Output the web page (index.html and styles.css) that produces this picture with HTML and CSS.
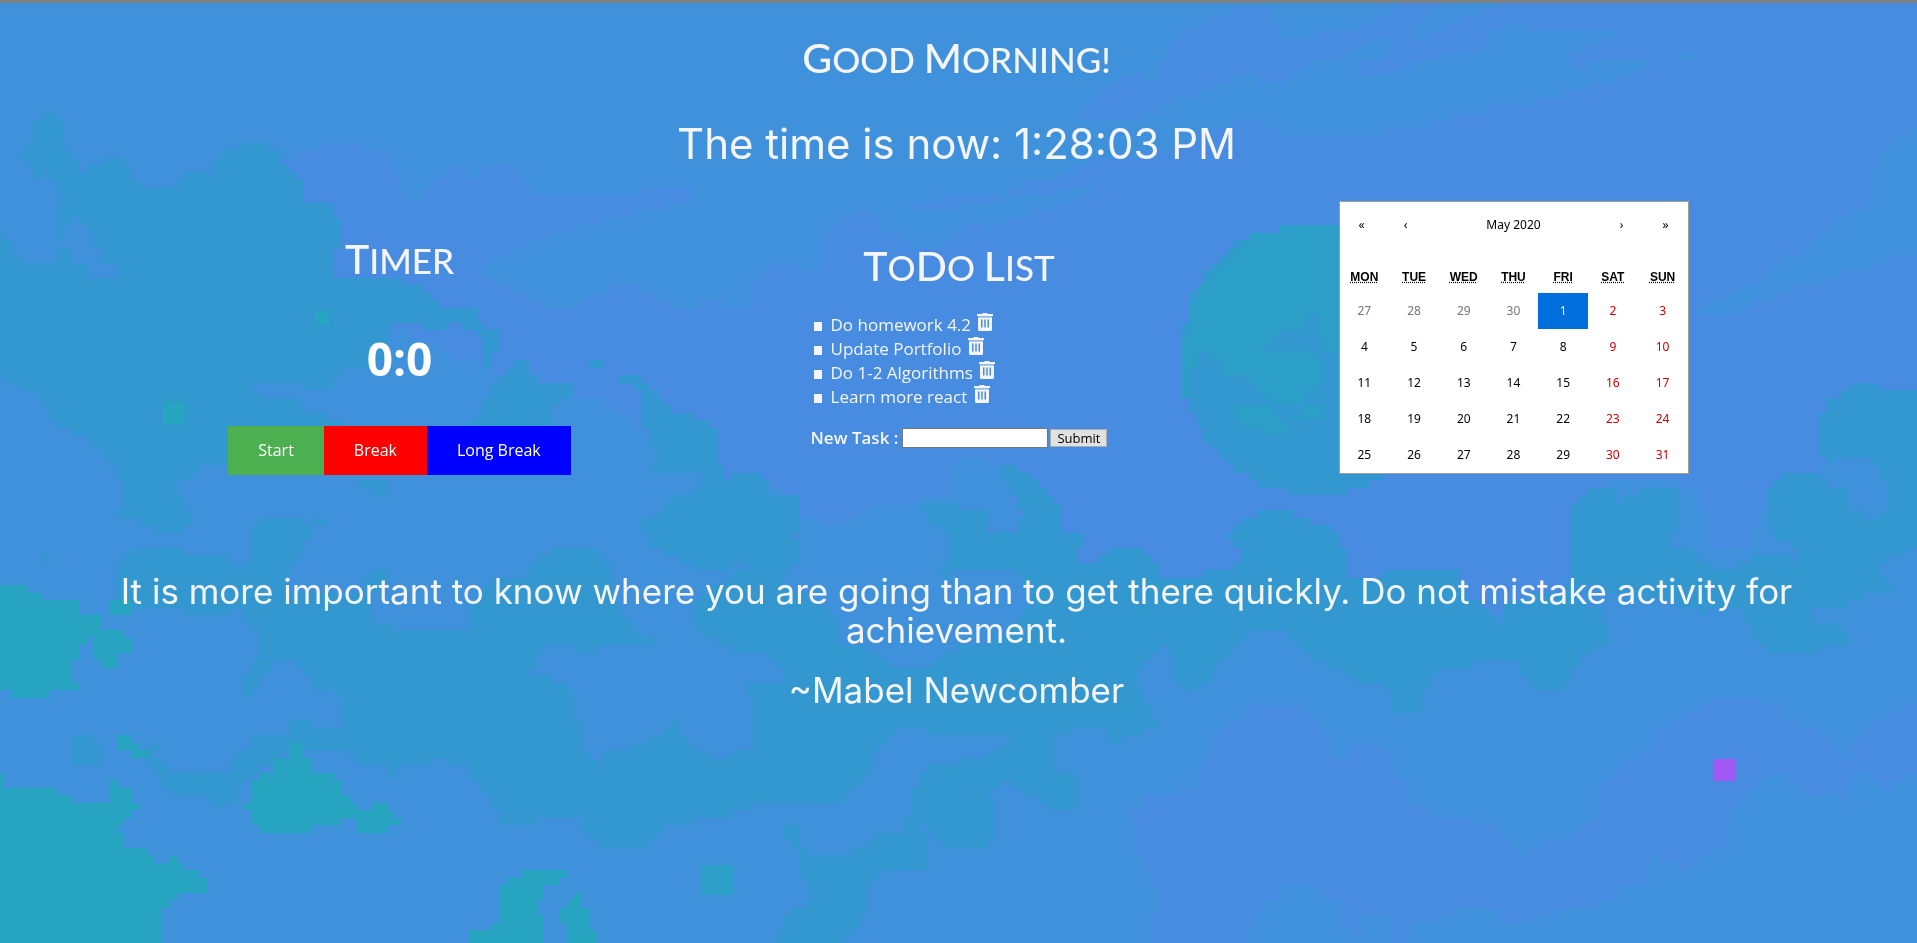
FILE: index.html
```html
<!DOCTYPE html>
<html lang="en">
<head>
<meta charset="utf-8">
<title>Good Morning!</title>
<link rel="stylesheet" href="styles.css">
</head>
<body>
<canvas class="backdrop" id="backdrop" width="1917" height="943" aria-hidden="true"></canvas>
<svg class="sprites" aria-hidden="true">
  <symbol id="trash" viewBox="0 0 16 18">
    <path fill="currentColor" d="M5.500 0h5v1H16v2H0V1h5.500z"/>
    <path fill="currentColor" opacity=".45" d="M1 3h14v1.500H1z"/>
    <path fill="currentColor" fill-rule="evenodd" d="M1 4.500h14V16.500Q15 18 13.500 18h-11Q1 18 1 16.500zM4 6.500v8h1.500v-8zM7.250 6.500v8h1.500v-8zM10.500 6.500v8H12v-8z"/>
  </symbol>
</svg>
<main class="page">
  <header class="intro">
    <h1 class="heading"><span>Good</span> <span>Morning!</span></h1>
    <p class="clock">The time is now: 1:28:03 PM</p>
  </header>
  <div class="widgets">
    <section class="timer">
      <h2 class="heading"><span>Timer</span></h2>
      <p class="count">0:0</p>
      <div class="actions">
        <button class="action start" type="button">Start</button>
        <button class="action break" type="button">Break</button>
        <button class="action long" type="button">Long Break</button>
      </div>
    </section>
    <section class="todo">
      <h2 class="heading"><span>To</span><span>Do</span> <span>List</span></h2>
      <div class="todo-body">
        <ul class="tasks">
          <li>Do homework 4.2 <button class="remove" type="button" aria-label="Delete"><svg><use href="#trash"/></svg></button></li>
          <li>Update Portfolio <button class="remove" type="button" aria-label="Delete"><svg><use href="#trash"/></svg></button></li>
          <li>Do 1-2 Algorithms <button class="remove" type="button" aria-label="Delete"><svg><use href="#trash"/></svg></button></li>
          <li>Learn more react <button class="remove" type="button" aria-label="Delete"><svg><use href="#trash"/></svg></button></li>
        </ul>
        <form class="new-task">
          <label for="task">New Task :</label>
          <input id="task" type="text" autofocus>
          <button class="submit" type="submit">Submit</button>
        </form>
      </div>
    </section>
    <section class="calendar">
      <nav class="months">
        <button type="button">«</button>
        <button type="button">‹</button>
        <button class="month" type="button">May 2020</button>
        <button type="button">›</button>
        <button type="button">»</button>
      </nav>
      <table class="days">
        <thead><tr><th><abbr title="Monday">MON</abbr></th><th><abbr title="Tuesday">TUE</abbr></th><th><abbr title="Wednesday">WED</abbr></th><th><abbr title="Thursday">THU</abbr></th><th><abbr title="Friday">FRI</abbr></th><th><abbr title="Saturday">SAT</abbr></th><th><abbr title="Sunday">SUN</abbr></th></tr></thead>
        <tbody>
          <tr><td class="other">27</td><td class="other">28</td><td class="other">29</td><td class="other">30</td><td class="today">1</td><td class="weekend">2</td><td class="weekend">3</td></tr>
          <tr><td>4</td><td>5</td><td>6</td><td>7</td><td>8</td><td class="weekend">9</td><td class="weekend">10</td></tr>
          <tr><td>11</td><td>12</td><td>13</td><td>14</td><td>15</td><td class="weekend">16</td><td class="weekend">17</td></tr>
          <tr><td>18</td><td>19</td><td>20</td><td>21</td><td>22</td><td class="weekend">23</td><td class="weekend">24</td></tr>
          <tr><td>25</td><td>26</td><td>27</td><td>28</td><td>29</td><td class="weekend">30</td><td class="weekend">31</td></tr>
        </tbody>
      </table>
    </section>
  </div>
  <section class="quote">
    <p>It is more important to know where you are going than to get there quickly. Do not mistake activity for achievement.</p>
    <p>~Mabel Newcomber</p>
  </section>
</main>
<script src="backdrop.js"></script>
</body>
</html>
```
FILE: styles.css
```css
* { box-sizing: border-box; }

body {
  margin: 0;
  min-height: 100vh;
  border-top: 3px solid #808080;
  background: #3f90db;
  color: #f5f5f5;
  font-family: "Open Sans", sans-serif;
  font-size: 16px;
}

.backdrop {
  position: fixed;
  inset: 0;
  z-index: -1;
  width: 100%;
  height: 100%;
  object-fit: cover;
}

.sprites { display: none; }

.page { padding-right: 4px; }

.heading {
  margin: 0;
  font-family: Lato, sans-serif;
  font-size: 35px;
  line-height: 48px;
  font-weight: 500;
  text-align: center;
  text-transform: uppercase;
}

.heading span { display: inline-block; }
.heading span::first-letter { font-size: 41px; }

.intro {
  padding-top: 31px;
  text-align: center;
}

.clock {
  margin: 35px 0 0;
  font-family: Inter, sans-serif;
  font-size: 42px;
  line-height: 52px;
}

.widgets {
  display: grid;
  grid-template-columns: repeat(3, 1fr);
  margin: 31px 121px 0;
  align-items: start;
}

.timer, .todo, .calendar { justify-self: center; }

.timer { padding-top: 34px; }

.count {
  margin: 43px 0 36px;
  color: #fff;
  font-size: 46px;
  line-height: 63px;
  font-weight: 700;
  text-align: center;
}

.actions { display: flex; }

.action {
  padding: 0 30px;
  border: 0;
  color: #fff;
  font: 16px/49px "Open Sans", sans-serif;
}

.start { background: #4caf50; }
.break { background: #f00; }
.long { background: #00f; }

.todo { padding: 41px 0 0 5px; }

.tasks {
  margin: 22px 0 19px;
  padding-left: 3px;
  font-size: 17px;
  line-height: 24px;
  list-style: none;
}

.tasks li::before {
  content: "";
  display: inline-block;
  width: 8px;
  height: 9px;
  margin-right: 9px;
  background: #f5f5f5;
}

.remove {
  margin-left: 2px;
  padding: 0;
  border: 0;
  background: none;
  color: inherit;
}

.remove svg {
  display: block;
  width: 16px;
  height: 18px;
}

.new-task {
  display: flex;
  align-items: center;
  gap: 2px;
}

.new-task label {
  margin-right: 2px;
  font-size: 17px;
  line-height: 20px;
  font-weight: 600;
}

.new-task input {
  width: 146px;
  height: 20px;
  padding: 1px 2px;
  border: 1px solid #767676;
  outline: 0;
  background: #fff;
  color: #000;
}

.submit {
  height: 18px;
  padding: 0 6px;
  border: 1px solid #adadad;
  background: #e1e1e1;
  color: #000;
  font: 13px/14px "Open Sans", sans-serif;
}

.calendar {
  width: 350px;
  border: 1px solid #a0a096;
  background: #fff;
  color: #000;
  font-size: 12px;
}

.months {
  display: flex;
  height: 46px;
  margin-bottom: 14px;
}

.months button {
  flex: 0 0 44px;
  padding: 0;
  border: 0;
  background: none;
  color: #000;
  font: 12px/46px "Noto Sans", sans-serif;
}

.months .month { flex: 1; }

.days {
  width: 100%;
  border-collapse: collapse;
  table-layout: fixed;
  font-family: "Noto Sans", sans-serif;
}

.days th {
  height: 31px;
  padding: 0 0 1px;
  font: bold 12px/14px "Liberation Sans", sans-serif;
}

.days td {
  height: 36px;
  padding: 0;
  line-height: 16px;
  text-align: center;
}

.days .other { color: #757575; }
.days .weekend { color: #d10000; }
.days .today { background: #006edc; color: #fff; }

.quote {
  padding: 97px 96px 0;
  font-family: Inter, sans-serif;
  font-size: 35px;
  line-height: 39px;
  text-align: center;
}

.quote p { margin: 0 0 21px; }
```
FILE: backdrop.js
```javascript
const CELL = 7.5;
const OFFSET = -3.5;
const canvas = document.getElementById("backdrop");
const ctx = canvas.getContext("2d");

const SKY = "#3f91db";
const BRIGHT = "#478ce1";
const MIST = "#3498d0";
const LAGOON = "#2b9fc8";
const TEAL = "#26a4c0";

// Each shape is a colour and the outline of a landmass; outlines are snapped to the cell grid.
const shapes = [
  [BRIGHT, "285,160 300,151 323,144 360,144 383,152 398,170 399,185 413,204 420,204 429,185 440,173 453,166 462,171 470,180 476,173 490,166 512,166 520,180 527,195 640,196 648,188 700,188 687,200 665,205 660,211 640,211 613,219 582,227 558,234 536,241 520,248 495,257 483,262 483,275 505,284 525,295 545,304 565,309 583,305 597,297 613,288 640,288 657,295 680,308 695,310 700,303 725,303 728,310 747,310 755,285 757,275 775,265 795,266 808,272 823,272 823,258 817,250 825,235 835,225 850,213 877,213 885,232 900,235 915,250 940,248 948,235 965,228 985,228 990,233 1000,227 1017,218 1045,210 1060,203 1087,195 1090,190 1060,190 1050,196 1008,196 1008,190 1030,182 1050,180 1065,173 1085,165 1095,155 1110,150 1130,140 1180,125 1075,120 1085,112 1090,102 1100,92 1110,83 1125,77 1155,80 1160,70 1165,50 1175,37 1190,30 1200,22 1220,14 1280,0 1917,0 1917,580 1550,620 1080,590 960,520 945,498 885,500 828,530 803,520 795,495 700,470 600,400 490,372 300,280 270,200"],
  [BRIGHT, "915,211 915,203 938,203 938,196 998,196 998,203 966,203 966,211"],
  [SKY, "1265,3 1400,3 1390,10 1375,20 1362,28 1345,30 1320,31 1315,36 1282,36 1277,25"],
  [SKY, "1440,3 1500,3 1470,15 1450,25 1422,35 1410,37 1415,27 1425,15"],
  [SKY, "1130,122 1150,112 1170,102 1190,95 1220,83 1240,75 1258,78 1277,85 1300,70 1320,60 1345,55 1350,50 1370,45 1375,37 1395,38 1387,55 1365,62 1355,70 1360,75 1395,75 1400,68 1425,62 1450,53 1475,50 1490,45 1493,30 1510,22 1520,22 1530,30 1620,30 1600,45 1580,52 1560,60 1575,67 1600,60 1668,60 1635,72 1605,82 1575,90 1550,97 1515,105 1480,110 1450,117 1415,127 1370,134 1285,134 1260,123 1235,123 1215,128 1180,145 1130,155 1100,160 1090,140"],
  [SKY, "1675,53 1698,53 1698,60 1675,60"],
  [SKY, "1917,127 1895,135 1880,150 1875,165 1873,200 1865,208 1845,215 1830,222 1820,240 1805,250 1780,260 1760,280 1740,288 1715,298 1705,310 1690,313 1690,318 1730,318 1745,305 1770,300 1790,288 1820,280 1860,270 1890,258 1917,250"],
  [SKY, "947,465 960,458 975,455 1000,470 1022,520 1005,535 980,520 950,510"],
  [SKY, "795,525 815,515 828,532 850,518 870,508 885,500 950,500 950,570 795,570"],
  [SKY, "1560,600 1570,570 1610,480 1650,478 1700,490 1707,545 1750,545 1760,510 1820,470 1850,430 1917,390 1917,700 1560,700"],
  [BRIGHT, "1250,707 1300,706 1310,720 1325,728 1333,745 1335,757 1345,758 1350,745 1375,744 1390,752 1395,770 1408,785 1410,800 1425,810 1440,818 1485,822 1505,832 1513,845 1518,857 1527,848 1550,840 1560,840 1575,835 1585,820 1605,812 1600,785 1615,770 1630,758 1650,748 1655,730 1675,720 1700,710 1715,700 1755,699 1775,705 1790,722 1820,732 1835,745 1845,755 1857,740 1870,725 1890,712 1917,706 1917,774 1900,780 1885,787 1870,775 1850,776 1845,785 1848,803 1843,803 1835,790 1810,795 1800,785 1785,775 1765,776 1757,790 1738,800 1728,815 1730,840 1720,850 1705,852 1695,865 1685,872 1675,860 1655,858 1645,870 1650,885 1620,882 1612,900 1585,905 1555,910 1545,917 1515,924 1495,925 1493,905 1460,905 1450,918 1420,920 1410,930 1408,943 1395,943 1393,912 1365,912 1363,943 1350,930 1335,925 1340,915 1335,900 1325,897 1310,885 1285,885 1270,903 1257,905 1250,930 1250,943 1150,943 1150,920 1160,905 1160,895 1145,868 1138,850 1137,835 1128,815 1140,810 1150,795 1175,795 1195,785 1200,772 1212,755 1213,735 1225,728"],
  [MIST, "42,113 56,113 65,122 65,150 72,152 80,165 84,174 92,165 103,160 125,158 130,165 133,180 140,188 170,188 183,180 190,173 208,173 215,160 225,150 240,143 262,143 265,150 277,151 283,165 293,173 300,175 301,188 307,203 337,203 337,217 345,219 345,241 332,250 332,262 338,278 362,274 395,275 395,280 412,283 428,290 440,308 475,311 483,325 497,333 497,348 490,355 488,370 482,370 482,340 470,330 460,326 445,326 438,333 428,330 413,320 400,318 390,326 383,340 385,363 345,365 337,375 335,392 310,392 305,386 248,386 262,398 300,402 312,415 343,418 345,428 226,426 226,463 195,470 178,485 185,510 193,515 190,525 178,530 160,538 153,525 138,520 118,513 125,505 125,490 118,475 118,463 108,463 95,445 72,432 55,425 50,412 40,400 25,388 10,380 0,378 0,235 10,245 13,255 20,263 45,263 57,257 60,248 70,250 72,262 85,265 90,280 110,278 117,268 103,262 103,250 93,240 88,228 80,220 72,220 65,230 63,241 57,241 57,203 64,200 57,185 50,180 42,173 38,180 33,172 33,165 25,158 20,152 28,143 38,135 35,125"],
  [MIST, "465,426 480,410 490,390 505,370 515,363 527,363 535,375 545,385 565,385 570,378 573,400 550,402 550,430"],
  [MIST, "590,363 603,363 604,371 590,371"],
  [MIST, "360,478 385,478 390,490 380,492 360,490"],
  [MIST, "42,553 49,553 49,561 42,561"],
  [MIST, "71,737 95,737 95,744 102,745 102,758 95,766 80,766 72,758"],
  [MIST, "118,605 118,565 125,553 155,547 185,547 187,553 225,555 243,570 250,560 248,540 262,517 292,515 308,523 308,515 330,515 330,523 312,530 305,550 292,563 285,575 290,590 360,592 375,570 390,570 388,580 372,592 370,625 465,630 468,600 495,580 530,575 532,560 545,553 560,547 590,547 605,560 612,575 615,600 625,620 635,630 655,640 655,645 600,645 595,650 575,650 570,645 545,645 535,658 530,673 560,680 575,695 580,740 590,755 600,765 610,750 640,742 660,735 675,723 683,738 695,750 720,758 750,748 755,735 755,705 748,692 748,683 763,683 785,683 782,670 770,655 725,648 715,638 695,630 690,618 697,602 715,590 730,580 730,575 750,565 755,560 740,560 730,568 700,573 690,562 678,550 648,548 642,520 660,515 665,500 703,490 703,472 650,470 655,455 648,435 640,410 645,395 620,378 617,371 640,378 655,395 675,410 703,418 716,435 718,463 728,480 740,472 762,472 770,492 795,495 800,510 793,530 800,555 787,570 787,585 832,610 840,643 875,650 890,667 930,667 950,650 1000,640 1035,600 1025,575 1000,570 975,568 945,575 945,562 953,545 945,530 928,520 918,505 950,505 983,510 990,530 1015,530 1022,510 1012,490 1000,470 992,465 1007,465 1040,480 1058,505 1063,530 1082,535 1080,548 1075,562 1097,560 1110,548 1145,548 1157,565 1158,577 1200,575 1225,570 1240,560 1240,545 1226,540 1230,530 1250,518 1270,508 1285,508 1305,520 1333,525 1342,545 1348,575 1385,575 1395,570 1455,569 1460,590 1480,605 1500,620 1508,600 1560,590 1575,580 1580,600 1600,612 1607,625 1605,645 1580,655 1575,670 1560,690 1535,691 1525,680 1515,660 1440,667 1425,690 1423,711 1393,711 1390,687 1355,680 1333,670 1310,655 1295,640 1277,630 1250,630 1235,645 1220,665 1205,683 1185,690 1172,670 1172,650 1165,645 1150,655 1140,665 1140,690 1150,710 1157,725 1140,735 1110,742 1105,730 1075,730 1052,736 1052,770 1075,775 1074,811 1055,811 1040,800 1010,783 985,785 993,800 998,820 990,842 965,850 935,842 928,825 920,830 930,850 930,873 880,873 865,890 862,920 845,943 775,943 785,920 790,908 815,900 803,880 800,855 787,838 787,828 795,828 800,842 808,858 850,858 855,850 875,835 900,835 907,820 912,800 920,775 940,762 975,760 990,750 1010,745 1013,736 945,736 920,728 900,730 880,745 870,770 858,788 840,805 760,805 740,812 705,818 665,827 640,849 612,849 590,842 580,820 537,820 535,826 507,826 500,820 490,797 475,780 465,765 440,760 410,765 385,780 385,768 360,765 345,752 285,750 255,775 240,790 230,804 218,808 200,797 170,795 163,782 150,767 148,743 163,745 155,757 170,774 222,774 230,767 230,755 245,750 255,737 285,733 290,721 305,721 315,728 335,728 345,715 345,705 335,692 315,690 315,680 305,668 292,661 275,663 262,675 255,690 247,698 247,680 250,665 262,655 262,640 250,625 240,610 220,613 190,613 165,605"],
  [MIST, "735,473 762,473 770,495 800,497 800,515 793,545 785,570 740,600 700,600 745,560 700,567 650,545 642,522 665,510 680,493 703,490"],
  [SKY, "732,563 755,558 750,566 735,572"],
  [MIST, "1575,580 1575,555 1570,540 1570,515 1580,495 1600,485 1613,487 1620,505 1630,495 1655,485 1675,490 1680,510 1668,545 1685,548 1700,560 1730,573 1745,560 1765,555 1800,560 1795,545 1780,540 1768,525 1767,495 1775,480 1785,470 1810,470 1820,480 1845,490 1850,500 1855,513 1880,516 1887,500 1880,463 1850,455 1825,463 1820,450 1820,415 1830,400 1845,388 1860,380 1875,383 1880,400 1882,393 1917,393 1917,550 1890,555 1880,570 1885,585 1895,590 1870,595 1845,605 1805,612 1815,620 1842,622 1850,640 1810,652 1765,652 1755,635 1745,615 1735,605 1700,613 1690,605 1640,600"],
  [MIST, "1181,360 1183,330 1190,300 1205,275 1225,252 1245,238 1262,231 1350,227 1400,250 1440,300 1450,360 1440,410 1410,460 1370,485 1340,493 1290,493 1262,485 1240,473 1215,450 1197,425 1185,400"],
  [LAGOON, "1181,341 1189,340 1189,303 1196,303 1196,288 1204,287 1204,280 1211,273 1219,265 1226,257 1234,249 1241,242 1257,234 1287,227 1338,227 1338,356 1325,348 1325,340 1317,340 1317,318 1310,318 1303,325 1303,333 1280,333 1272,340 1264,348 1264,355 1272,350 1310,350 1318,360 1325,363 1325,378 1318,385 1310,395 1300,402 1272,402 1265,393 1257,385 1250,377 1226,377 1219,365 1211,356 1204,349 1196,358 1196,370 1189,372 1189,394 1181,394"],
  [LAGOON, "1234,402 1265,402 1272,410 1280,418 1287,425 1287,432 1264,432 1264,425 1242,424 1242,417 1234,416"],
  [LAGOON, "1303,402 1325,402 1325,418 1318,423 1303,423 1295,415"],
  [TEAL, "0,584 26,584 28,591 40,592 42,599 71,600 80,607 80,614 102,615 102,630 125,630 125,638 132,638 132,645 125,652 118,655 118,667 102,667 95,650 95,640 100,637 87,637 87,645 80,647 80,660 72,661 72,682 80,683 80,690 50,691 48,698 12,698 12,691 0,690"],
  [TEAL, "110,599 132,599 132,614 110,614"],
  [TEAL, "0,774 3,774 5,782 10,789 56,789 57,796 71,797 72,804 110,804 110,782 117,782 118,789 132,789 133,797 140,803 140,812 133,812 132,820 125,821 118,830 125,838 125,850 148,850 150,857 156,865 170,865 171,857 178,857 179,865 186,865 188,873 201,873 202,880 208,881 208,895 179,896 171,903 170,910 163,911 163,943 0,943"],
  [TEAL, "117,736 133,736 133,743 140,744 140,751 148,752 148,759 133,759 132,751 117,750"],
  [TEAL, "292,744 307,744 308,766 315,767 315,774 330,774 331,782 338,782 338,796 345,797 346,804 353,804 353,819 345,820 345,827 315,828 315,834 262,834 261,827 254,826 254,812 247,811 247,800 254,796 254,782 262,781 262,774 270,773 277,760 290,759"],
  [TEAL, "368,804 384,804 384,811 391,812 391,819 398,820 398,827 384,828 384,834 353,834 353,827 360,826 360,812 368,811"],
  [TEAL, "520,873 566,873 566,880 558,881 558,888 543,889 543,896 535,897 535,911 543,912 543,943 460,943 467,941 467,933 490,932 490,926 497,925 497,889 505,888 505,881 520,880"],
  [TEAL, "573,896 581,896 581,910 589,911 589,933 596,934 597,941 612,943 566,943 566,925 558,925 558,911 566,910 566,904 573,903"]
];

const blocks = [
  [TEAL, 315, 310, 15, 15],
  [TEAL, 163, 401, 23, 23],
  [LAGOON, 702, 865, 31, 30],
  ["#a259f3", 1713, 759, 23, 22]
];

ctx.fillStyle = SKY;
ctx.fillRect(0, 0, canvas.width, canvas.height);

for (const [color, outline] of shapes) {
  const path = new Path2D("M" + outline.split(" ").join("L") + "Z");
  ctx.fillStyle = color;
  for (let y = 0; y < canvas.height; y += CELL) {
    for (let x = OFFSET; x < canvas.width; x += CELL) {
      if (ctx.isPointInPath(path, x + CELL / 2, y + CELL / 2)) {
        const left = Math.round(x);
        const top = Math.round(y);
        ctx.fillRect(left, top, Math.round(x + CELL) - left, Math.round(y + CELL) - top);
      }
    }
  }
}

for (const [color, ...box] of blocks) {
  ctx.fillStyle = color;
  ctx.fillRect(...box);
}
```
